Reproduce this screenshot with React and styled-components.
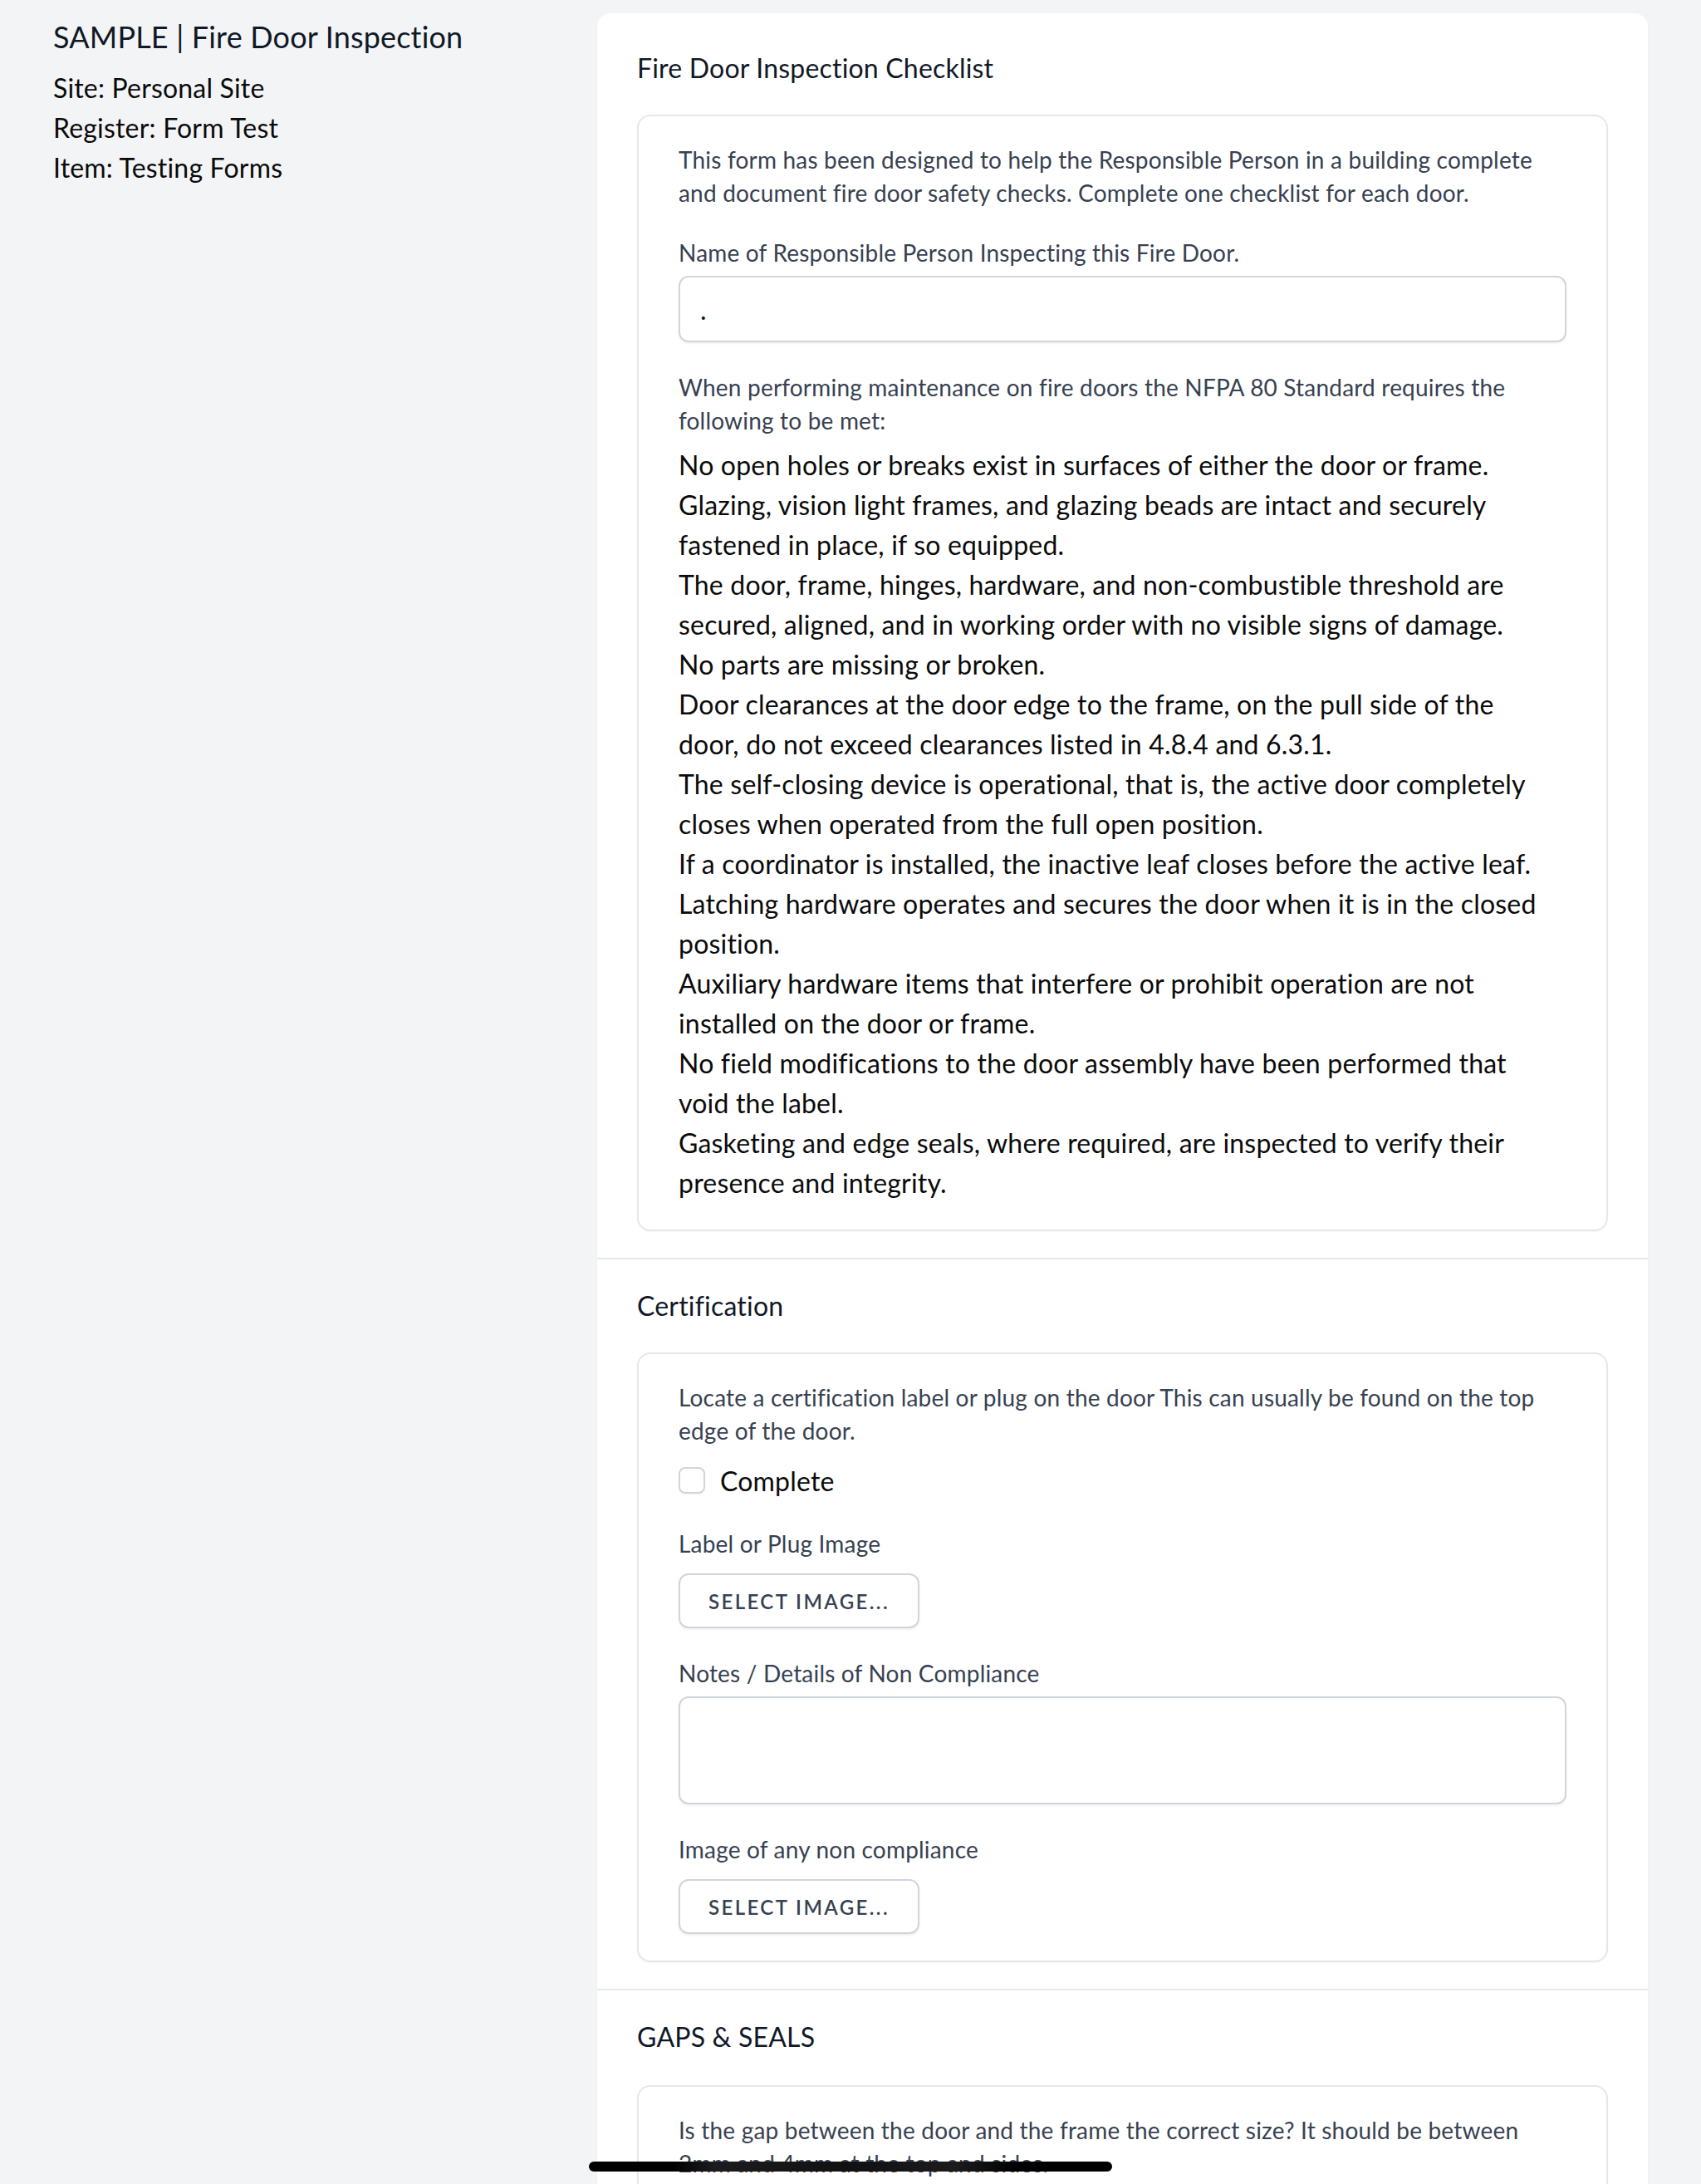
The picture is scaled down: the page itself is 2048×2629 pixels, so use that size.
import React from 'react';
import styled, { createGlobalStyle } from 'styled-components';

const GlobalStyle = createGlobalStyle`
  html, body {
    margin: 0;
    background: #f3f4f6;
  }
  body {
    font-family: Lato, "Noto Sans", sans-serif;
    color: #111827;
    letter-spacing: 0.012em;
    -webkit-font-smoothing: antialiased;
  }
  * {
    box-sizing: border-box;
  }
`;

const Page = styled.div`
  display: flex;
  align-items: flex-start;
  min-height: 2629px;
  padding: 16px 64px 0 64px;
`;

const Sidebar = styled.aside`
  flex: none;
  width: 655px;
`;

const Title = styled.h1`
  margin: 0 0 10px;
  font-size: 36px;
  line-height: 56px;
  font-weight: 400;
  letter-spacing: 0.005em;
  color: #111827;
`;

const Meta = styled.p`
  margin: 0;
  font-size: 32px;
  line-height: 48px;
  color: #0b0b0b;
`;

const Card = styled.main`
  flex: 1;
  background: #fff;
  border-radius: 16px;
  padding-top: 10px;
  box-shadow: 0 1px 3px rgba(0, 0, 0, 0.04);
  overflow: hidden;
`;

const Section = styled.section`
  padding: 32px 48px 32px;
  & + & {
    border-top: 2px solid #e5e7eb;
  }
`;

const SectionTitle = styled.h2`
  margin: 0 0 ${(p) => p.$gap || 32}px;
  font-size: 32px;
  line-height: 48px;
  font-weight: 400;
  color: #111827;
`;

const Panel = styled.div`
  border: 2px solid #e5e7eb;
  border-radius: 16px;
  padding: 32px 48px;
  box-shadow: 0 1px 2px rgba(0, 0, 0, 0.04);
`;

const Help = styled.p`
  margin: ${(p) => p.$top || 0}px 0 0;
  font-size: 28px;
  line-height: 40px;
  color: #374151;
  white-space: pre-line;
`;

const Label = styled.label`
  display: block;
  margin-top: ${(p) => p.$top || 32}px;
  font-size: 28px;
  line-height: 40px;
  color: #374151;
`;

const TextInput = styled.input`
  display: block;
  width: 100%;
  height: 80px;
  margin-top: 8px;
  padding: 0 24px;
  border: 2px solid #d1d5db;
  border-radius: 12px;
  box-shadow: 0 2px 3px rgba(0, 0, 0, 0.05);
  font-family: inherit;
  font-size: 32px;
  color: #111827;
  background: #fff;
  outline: none;
`;

const TextArea = styled.textarea`
  display: block;
  width: 100%;
  height: 130px;
  margin-top: 8px;
  padding: 16px 24px;
  border: 2px solid #d1d5db;
  border-radius: 12px;
  box-shadow: 0 2px 3px rgba(0, 0, 0, 0.05);
  font-family: inherit;
  font-size: 32px;
  resize: none;
  outline: none;
`;

const Requirements = styled.div`
  margin-top: 10px;
  font-size: 32px;
  line-height: 48px;
  color: #0b0b0b;
  white-space: pre-line;
`;

const CheckRow = styled.label`
  display: flex;
  align-items: center;
  gap: 18px;
  height: 48px;
  margin-top: 16px;
  font-size: 32px;
  color: #0b0b0b;
`;

const Box = styled.span`
  width: 32px;
  height: 32px;
  border: 2px solid #d1d5db;
  border-radius: 8px;
  background: #fff;
  box-shadow: 0 1px 2px rgba(0, 0, 0, 0.05);
`;

const SelectButton = styled.button`
  display: block;
  height: 66px;
  margin-top: 16px;
  padding: 0 34px;
  border: 2px solid #d1d5db;
  border-radius: 12px;
  background: #fff;
  box-shadow: 0 2px 3px rgba(0, 0, 0, 0.06);
  font-family: inherit;
  font-size: 24px;
  font-weight: 600;
  letter-spacing: 0.1em;
  text-transform: uppercase;
  color: #374151;
`;

const HomeBar = styled.div`
  position: fixed;
  left: 709px;
  bottom: 15px;
  width: 630px;
  height: 12px;
  border-radius: 6px;
  background: linear-gradient(90deg, #000 0%, #000 16%, #1c1c1c 24%, #111 50%, #1c1c1c 70%, #000 82%, #000 100%);
`;

const requirements = [
  'No open holes or breaks exist in surfaces of either the door or frame.',
  'Glazing, vision light frames, and glazing beads are intact and securely\nfastened in place, if so equipped.',
  'The door, frame, hinges, hardware, and non-combustible threshold are\nsecured, aligned, and in working order with no visible signs of damage.',
  'No parts are missing or broken.',
  'Door clearances at the door edge to the frame, on the pull side of the\ndoor, do not exceed clearances listed in 4.8.4 and 6.3.1.',
  'The self-closing device is operational, that is, the active door completely\ncloses when operated from the full open position.',
  'If a coordinator is installed, the inactive leaf closes before the active leaf.',
  'Latching hardware operates and secures the door when it is in the closed\nposition.',
  'Auxiliary hardware items that interfere or prohibit operation are not\ninstalled on the door or frame.',
  'No field modifications to the door assembly have been performed that\nvoid the label.',
  'Gasketing and edge seals, where required, are inspected to verify their\npresence and integrity.',
];

const Checkbox = ({ label }) => (
  <CheckRow>
    <Box />
    {label}
  </CheckRow>
);

const App = () => {
  return (
    <>
      <GlobalStyle />
      <Page>
        <Sidebar>
          <Title>SAMPLE | Fire Door Inspection</Title>
          <Meta>Site: Personal Site</Meta>
          <Meta>Register: Form Test</Meta>
          <Meta>Item: Testing Forms</Meta>
        </Sidebar>

        <Card>
          <Section>
            <SectionTitle>Fire Door Inspection Checklist</SectionTitle>
            <Panel>
              <Help>
                {'This form has been designed to help the Responsible Person in a building complete\nand document fire door safety checks. Complete one checklist for each door.'}
              </Help>
              <Label>Name of Responsible Person Inspecting this Fire Door.</Label>
              <TextInput defaultValue="." readOnly />
              <Help $top={34}>
                {'When performing maintenance on fire doors the NFPA 80 Standard requires the\nfollowing to be met:'}
              </Help>
              <Requirements>
                {requirements.map((r) => (
                  <div key={r}>{r}</div>
                ))}
              </Requirements>
            </Panel>
          </Section>

          <Section>
            <SectionTitle>Certification</SectionTitle>
            <Panel>
              <Help>
                {'Locate a certification label or plug on the door This can usually be found on the top\nedge of the door.'}
              </Help>
              <Checkbox label="Complete" />
              <Label>Label or Plug Image</Label>
              <SelectButton>Select image...</SelectButton>
              <Label $top={34}>Notes / Details of Non Compliance</Label>
              <TextArea />
              <Label $top={34}>Image of any non compliance</Label>
              <SelectButton>Select image...</SelectButton>
            </Panel>
          </Section>

          <Section>
            <SectionTitle $gap={34}>GAPS &amp; SEALS</SectionTitle>
            <Panel>
              <Help>
                {'Is the gap between the door and the frame the correct size? It should be between\n2mm and 4mm at the top and sides.'}
              </Help>
              <Checkbox label="Complete" />
              <Label>Gap Image</Label>
              <SelectButton>Select image...</SelectButton>
            </Panel>
          </Section>
        </Card>
      </Page>
      <HomeBar />
    </>
  );
};

export default App;
